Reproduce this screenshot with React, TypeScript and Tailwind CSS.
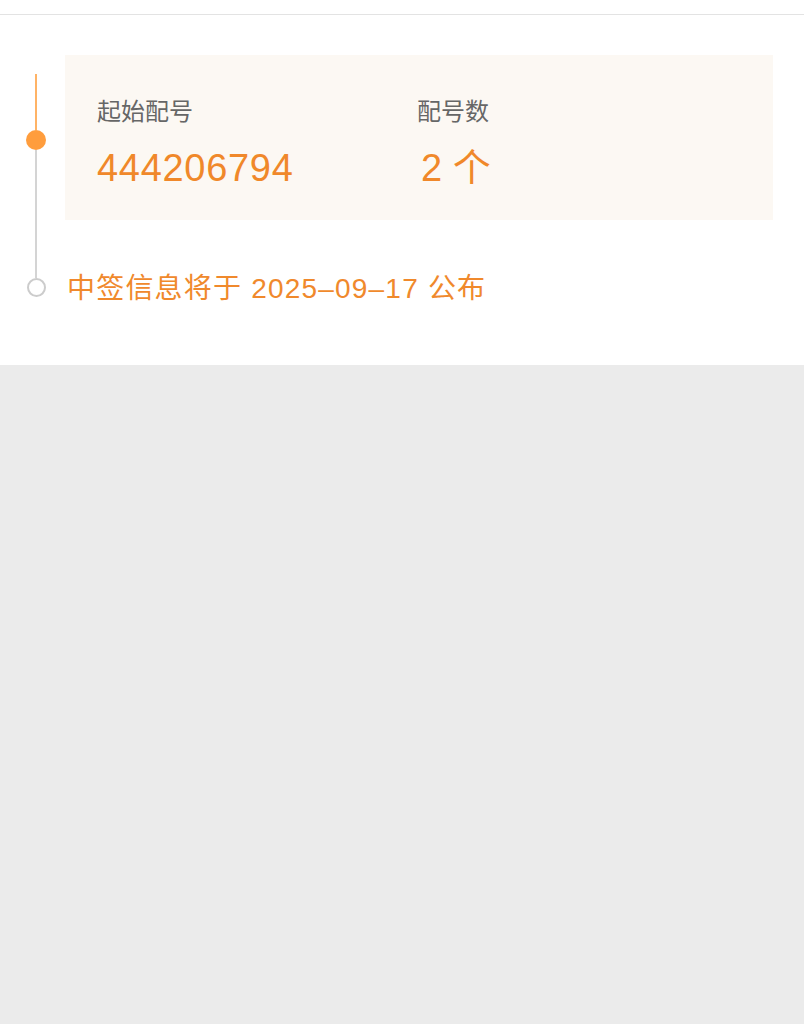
import React from "react";

export default function App() {
  const font = { fontFamily: '"Liberation Sans", "Noto Sans CJK SC", sans-serif' };
  return (
    <div className="min-h-screen bg-[#ebebeb]" style={font}>
      <div className="h-[15px] bg-white border-b border-[#e3e3e3]" />
      <div className="bg-white pt-[40px] pb-[62px] pl-[26px] pr-[31px]">
        <div className="flex gap-[19px]">
          <div className="w-[20px] flex flex-col items-center">
            <div className="h-[19px]" />
            <div className="w-[2px] h-[56px] bg-[#ffb366]" />
            <div className="w-[20px] h-[20px] rounded-full bg-[#ff9d3d]" />
            <div className="w-[2px] flex-1 bg-[#d4d4d4]" />
          </div>
          <div className="flex-1 bg-[#fcf8f3] h-[165px] pl-[32px] pt-[45px] flex">
            <div className="w-[320px] flex flex-col">
              <div className="text-[24px] leading-[24px] text-[#666666]">起始配号</div>
              <div className="mt-[25px] text-[38px] leading-[38px] tracking-[0.7px] text-[#f0882a]">444206794</div>
            </div>
            <div className="flex flex-col">
              <div className="text-[24px] leading-[24px] text-[#666666]">配号数</div>
              <div className="mt-[25px] pl-[4px] text-[38px] leading-[38px] text-[#f0882a]">2 个</div>
            </div>
          </div>
        </div>
        <div className="flex gap-[21px]">
          <div className="w-[20px] flex flex-col items-center">
            <div className="w-[2px] h-[58px] bg-[#d4d4d4]" />
            <div className="w-[19px] h-[19px] rounded-full border-2 border-[#cccccc] bg-white" />
          </div>
          <div className="mt-[55px] text-[28px] leading-[28px] tracking-[1.2px] text-[#f0892c]">
            中签信息将于 2025–09–17 公布
          </div>
        </div>
      </div>
    </div>
  );
}
